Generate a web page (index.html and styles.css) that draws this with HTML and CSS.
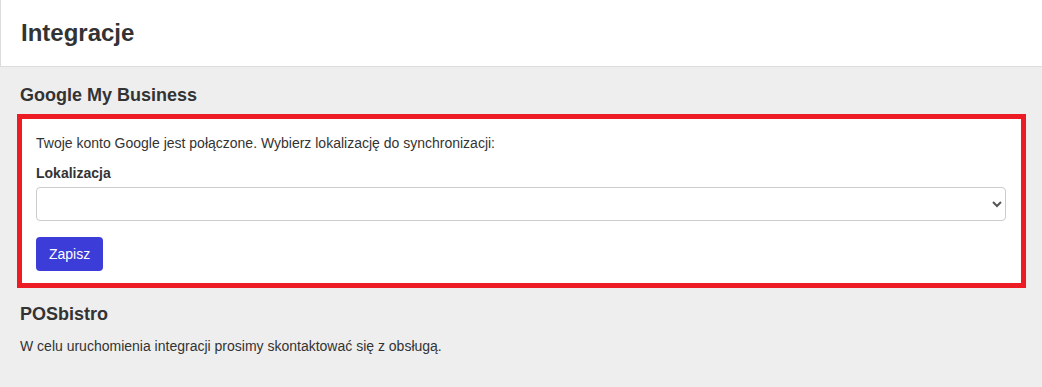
FILE: index.html
```html
<!DOCTYPE html>
<html lang="pl">
<head>
    <meta charset="UTF-8">
    <meta name="viewport" content="width=device-width, initial-scale=1.0">
    <title>Integracje</title>
    <link rel="stylesheet" href="styles.css">
</head>
<body>
    <div class="page-header">
        <h1>Integracje</h1>
    </div>

    <div class="content">
        <div class="section">
            <h2>Google My Business</h2>
            <div class="card">
                <p>Twoje konto Google jest połączone. Wybierz lokalizację do synchronizacji:</p>
                <div class="form-group">
                    <label for="location">Lokalizacja</label>
                    <select id="location">
                        <option value=""></option>
                    </select>
                </div>
                <button type="button">Zapisz</button>
            </div>
        </div>

        <div class="section section-pos">
            <h2>POSbistro</h2>
            <p>W celu uruchomienia integracji prosimy skontaktować się z obsługą.</p>
        </div>
    </div>
</body>
</html>
```

FILE: styles.css
```css
html, body {
    height: 100%;
}
body {
    margin: 0;
    font-family: "Liberation Sans", Arial, sans-serif;
    font-size: 14px;
    line-height: 20px;
    color: #333;
    background-color: #eee;
}
.page-header {
    background-color: white;
    border-left: 1px solid #ddd;
    border-bottom: 1px solid #ddd;
    padding: 19px 20px 19px;
}
h1 {
    margin: 0;
    font-size: 24px;
    line-height: 28px;
    font-weight: bold;
    color: #333;
}
.content {
    padding: 0 20px;
}
h2 {
    margin: 0;
    font-size: 18px;
    line-height: 21px;
    font-weight: bold;
    color: #333;
}
.section {
    padding-top: 18px;
}
.section h2 {
    margin-bottom: 8px;
}
.card {
    margin: 0 -4px 0 -3px;
    background-color: white;
    border: 5px solid #ed1c24;
    padding: 14px 15px 12px 14px;
}
p {
    margin: 0 0 10px;
}
.form-group {
    margin-bottom: 16px;
}
label {
    display: block;
    margin-bottom: 4px;
    font-weight: bold;
}
select {
    display: block;
    width: 100%;
    height: 34px;
    padding: 6px 10px;
    font-family: inherit;
    font-size: 14px;
    color: #555;
    background-color: white;
    border: 1px solid #ccc;
    border-radius: 4px;
    box-sizing: border-box;
}
button {
    display: block;
    height: 34px;
    padding: 0 13px;
    font-family: inherit;
    font-size: 14px;
    color: white;
    background-color: #3c3cd8;
    border: none;
    border-radius: 4px;
    cursor: pointer;
}
.section-pos {
    padding-top: 16px;
}
.section-pos h2 {
    margin-bottom: 11px;
}
```
